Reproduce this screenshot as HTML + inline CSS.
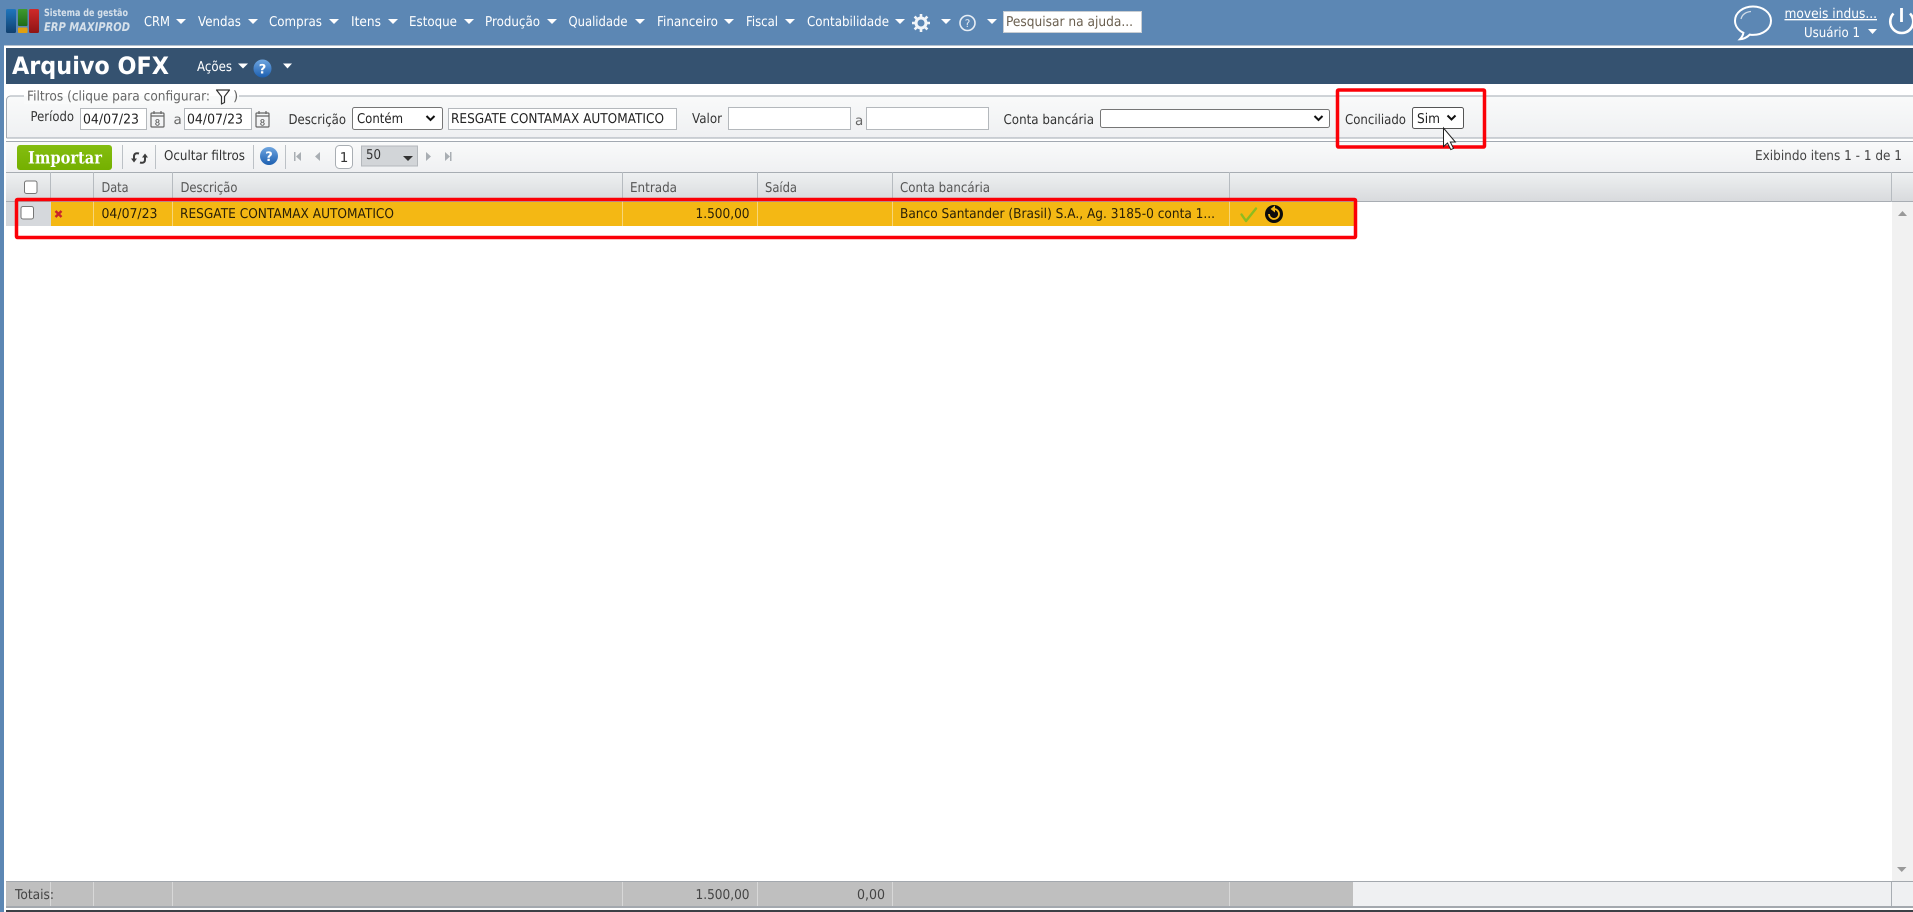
<!DOCTYPE html>
<html lang="pt-BR">
<head>
<meta charset="utf-8">
<title>Arquivo OFX</title>
<style>
html,body{margin:0;padding:0;width:1913px;height:912px;overflow:hidden;background:#fff}
svg{display:block;position:absolute;left:0;top:0}
text{font-family:"DejaVu Sans","Liberation Sans",sans-serif;font-size:13.5px;fill:#333;text-rendering:geometricPrecision;white-space:pre}
.n{fill:#fff}
.h{fill:#555}
.r{fill:#2a2008}
.v{fill:#222}
</style>
</head>
<body>
<svg width="1913" height="912" viewBox="0 0 1913 912" xmlns="http://www.w3.org/2000/svg">
<defs>
<linearGradient id="gf" x1="0" y1="0" x2="0" y2="1"><stop offset="0" stop-color="#f9fafa"/><stop offset="1" stop-color="#eff0f2"/></linearGradient>
<linearGradient id="gh" x1="0" y1="0" x2="0" y2="1"><stop offset="0" stop-color="#eff1f2"/><stop offset="1" stop-color="#d8dadd"/></linearGradient>
<linearGradient id="gb" x1="0" y1="0" x2="0" y2="1"><stop offset="0" stop-color="#1f76bd"/><stop offset="1" stop-color="#11406f"/></linearGradient>
<linearGradient id="gg" x1="0" y1="0" x2="0" y2="1"><stop offset="0" stop-color="#3f9a2e"/><stop offset="1" stop-color="#1f6b18"/></linearGradient>
<linearGradient id="gr" x1="0" y1="0" x2="0" y2="1"><stop offset="0" stop-color="#cf2a2a"/><stop offset="1" stop-color="#8e1414"/></linearGradient>
<linearGradient id="gq" x1="0" y1="0" x2="0" y2="1"><stop offset="0" stop-color="#6fa6e0"/><stop offset="1" stop-color="#1c5fb0"/></linearGradient>
<linearGradient id="gi" x1="0" y1="0" x2="0" y2="1"><stop offset="0" stop-color="#84bd10"/><stop offset="1" stop-color="#74b000"/></linearGradient>
</defs>

<!-- page frame -->
<rect width="1913" height="912" fill="#fff"/>
<rect x="0" y="0" width="1913" height="45" fill="#5c87b4"/>
<rect x="0" y="45" width="1913" height="1" fill="#b4c2d0"/>
<rect x="0" y="0" width="4" height="912" fill="#5c87b4"/>
<rect x="6" y="48" width="1907" height="36" fill="#355270"/>

<!-- logo -->
<rect x="6" y="9" width="10" height="24" rx="1.5" fill="url(#gb)"/>
<rect x="18" y="9" width="9.5" height="17" rx="1" fill="url(#gg)"/>
<rect x="18" y="27.5" width="9.5" height="5.5" rx="1" fill="#e0a010"/>
<rect x="29" y="9" width="10" height="24" rx="1.5" fill="url(#gr)"/>
<text x="44" y="16" style="font-size:10px;font-weight:bold;fill:#d5e0ea" textLength="84" lengthAdjust="spacingAndGlyphs">Sistema de gestão</text>
<text x="44" y="31" style="font-size:12px;font-weight:bold;font-style:italic;fill:#d5e0ea" textLength="86" lengthAdjust="spacingAndGlyphs">ERP MAXIPROD</text>

<!-- nav -->
<g class="nav">
<text class="n" x="144" y="26" textLength="26" lengthAdjust="spacingAndGlyphs">CRM</text><path d="M176 19h10l-5 5z" fill="#fff"/>
<text class="n" x="198" y="26" textLength="43" lengthAdjust="spacingAndGlyphs">Vendas</text><path d="M248 19h10l-5 5z" fill="#fff"/>
<text class="n" x="269" y="26" textLength="53" lengthAdjust="spacingAndGlyphs">Compras</text><path d="M329 19h10l-5 5z" fill="#fff"/>
<text class="n" x="351" y="26" textLength="30" lengthAdjust="spacingAndGlyphs">Itens</text><path d="M388 19h10l-5 5z" fill="#fff"/>
<text class="n" x="409" y="26" textLength="48" lengthAdjust="spacingAndGlyphs">Estoque</text><path d="M464 19h10l-5 5z" fill="#fff"/>
<text class="n" x="485" y="26" textLength="55" lengthAdjust="spacingAndGlyphs">Produção</text><path d="M547 19h10l-5 5z" fill="#fff"/>
<text class="n" x="568.5" y="26" textLength="59" lengthAdjust="spacingAndGlyphs">Qualidade</text><path d="M635 19h10l-5 5z" fill="#fff"/>
<text class="n" x="657" y="26" textLength="61" lengthAdjust="spacingAndGlyphs">Financeiro</text><path d="M724 19h10l-5 5z" fill="#fff"/>
<text class="n" x="746" y="26" textLength="32" lengthAdjust="spacingAndGlyphs">Fiscal</text><path d="M785 19h10l-5 5z" fill="#fff"/>
<text class="n" x="807" y="26" textLength="82" lengthAdjust="spacingAndGlyphs">Contabilidade</text><path d="M895 19h10l-5 5z" fill="#fff"/>
</g>
<!-- gear -->
<g transform="translate(921,23)" fill="none" stroke="#f2f5f8">
<circle r="5" stroke-width="3"/>
<path d="M0-9v3M0 6v3M-9 0h3M6 0h3M-6.400-6.400l2.100 2.100M4.300 4.300l2.100 2.100M-6.400 6.400l2.100-2.100M4.300-4.300l2.100-2.100" stroke-width="2.600"/>
</g>
<path d="M941 19h10l-5 5z" fill="#fff"/>
<circle cx="967.500" cy="23" r="7.500" fill="none" stroke="#e8eef5" stroke-width="1.600"/>
<text x="967.500" y="27" text-anchor="middle" style="font-size:10.500px;fill:#e8eef5">?</text>
<path d="M987 19h10l-5 5z" fill="#fff"/>
<rect x="1003.500" y="11.500" width="138" height="21" fill="#fff" stroke="#c8cdd2"/>
<text x="1006" y="26" style="fill:#6b6050" textLength="127" lengthAdjust="spacingAndGlyphs">Pesquisar na ajuda...</text>

<!-- user area -->
<path d="M1753 6.500c-10 0-18 6.200-18 14.200 0 5.200 3.400 9.600 8.400 12.100-.4 2.400-1.600 4.600-3.400 6.400 3.600-.2 7-1.900 9.800-4.600 1.100.2 2.200.3 3.200.3 10 0 18-6.200 18-14.200s-8-14.200-18-14.200z" fill="none" stroke="#fff" stroke-width="2"/>
<path d="M1741 19c1-4.500 5-7.200 10-7.500" fill="none" stroke="#cfdbe8" stroke-width="1.300"/>
<text class="n" x="1784.500" y="18" textLength="92.500" lengthAdjust="spacingAndGlyphs" text-decoration="underline">moveis indus...</text>
<text class="n" x="1804" y="37" textLength="56" lengthAdjust="spacingAndGlyphs">Usuário 1</text>
<path d="M1868 29h9l-4.500 5z" fill="#fff"/>
<path d="M1893.500 13.500a11.500 11.500 0 1 0 16.500 0" fill="none" stroke="#fff" stroke-width="2.600"/>
<path d="M1901.500 8v14" fill="none" stroke="#fff" stroke-width="2.800"/>

<!-- title bar -->
<text x="12" y="74" style="font-size:24px;font-weight:bold;fill:#fff" textLength="157" lengthAdjust="spacingAndGlyphs">Arquivo OFX</text>
<text class="n" x="197" y="71" textLength="35" lengthAdjust="spacingAndGlyphs">Ações</text>
<path d="M238 63.500h10l-5 5z" fill="#fff"/>
<circle cx="262.500" cy="68.500" r="9" fill="url(#gq)"/>
<text x="262.500" y="73.500" text-anchor="middle" style="font-size:13px;font-weight:bold;fill:#fff">?</text>
<path d="M283 63.500h9l-4.500 5z" fill="#fff"/>

<!-- filter panel -->
<path d="M6.500 138V100a4 4 0 0 1 4-4H1913V138z" fill="url(#gf)"/>
<path d="M6.500 138V100a4 4 0 0 1 4-4H1913M6.500 138H1913" fill="none" stroke="#a2a9b1"/>
<rect x="24" y="90" width="215" height="6" fill="#fff"/>
<rect x="24" y="96" width="215" height="8" fill="#f9fafa"/>
<text x="27" y="100.500" style="fill:#666" textLength="183" lengthAdjust="spacingAndGlyphs">Filtros (clique para configurar:</text>
<path d="M216.500 90h13l-5 6.500v6l-3 1.500v-7.500z" fill="#fff" stroke="#333" stroke-width="1.200" stroke-linejoin="round"/>
<text x="233" y="100.500" style="fill:#666">)</text>

<text x="30.500" y="121" textLength="43.500" lengthAdjust="spacingAndGlyphs">Período</text>
<rect x="80.500" y="108.500" width="66" height="21" fill="#fff" stroke="#b4b8bc"/>
<text class="v" x="83" y="123.500" textLength="56" lengthAdjust="spacingAndGlyphs">04/07/23</text>
<g fill="none" stroke="#666" stroke-width="1.200">
<rect x="151" y="113" width="13" height="14" rx="1"/><path d="M151 116h13M154 111v3M161 111v3"/>
<rect x="256" y="113" width="13" height="14" rx="1"/><path d="M256 116h13M259 111v3M266 111v3"/>
</g>
<text x="157.500" y="125.500" text-anchor="middle" style="font-size:8.500px;fill:#444">8</text>
<text x="262.500" y="125.500" text-anchor="middle" style="font-size:8.500px;fill:#444">8</text>
<text x="173.500" y="124" style="fill:#666">a</text>
<rect x="184.500" y="108.500" width="67" height="21" fill="#fff" stroke="#b4b8bc"/>
<text class="v" x="187" y="123.500" textLength="56" lengthAdjust="spacingAndGlyphs">04/07/23</text>

<text x="288.500" y="124" textLength="57.500" lengthAdjust="spacingAndGlyphs">Descrição</text>
<rect x="352.500" y="107.500" width="90" height="22" rx="2" fill="#fff" stroke="#767676"/>
<text class="v" x="357" y="123" textLength="46" lengthAdjust="spacingAndGlyphs">Contém</text>
<path d="M426.500 116l4 4 4-4" fill="none" stroke="#111" stroke-width="2"/>
<rect x="448.500" y="108.500" width="228" height="21" fill="#fff" stroke="#b4b8bc"/>
<text class="v" x="451" y="123" textLength="213" lengthAdjust="spacingAndGlyphs">RESGATE CONTAMAX AUTOMATICO</text>

<text x="692" y="123" textLength="30" lengthAdjust="spacingAndGlyphs">Valor</text>
<rect x="728.500" y="107.500" width="122" height="22" fill="#fff" stroke="#b4b8bc"/>
<text x="855" y="125" style="fill:#666">a</text>
<rect x="866.500" y="107.500" width="122" height="22" fill="#fff" stroke="#b4b8bc"/>

<text x="1003.500" y="124" textLength="90.500" lengthAdjust="spacingAndGlyphs">Conta bancária</text>
<rect x="1100.500" y="109.500" width="229" height="18" rx="2" fill="#fff" stroke="#767676"/>
<path d="M1314.500 116l4 4 4-4" fill="none" stroke="#111" stroke-width="2"/>

<text x="1345" y="124" textLength="61" lengthAdjust="spacingAndGlyphs">Conciliado</text>
<rect x="1412.500" y="107.500" width="51" height="21" rx="2" fill="#fff" stroke="#555"/>
<text class="v" x="1417" y="123" textLength="23" lengthAdjust="spacingAndGlyphs">Sim</text>
<path d="M1447.500 115.500l4 4 4-4" fill="none" stroke="#111" stroke-width="2"/>

<!-- toolbar -->
<rect x="6" y="142" width="1907" height="30" fill="url(#gf)"/>
<path d="M6 141.500H1913" stroke="#a2a9b1"/>
<rect x="17" y="145" width="95" height="25" rx="3" fill="url(#gi)"/>
<text x="28" y="163.500" style="font-family:'DejaVu Serif','Liberation Serif',serif;font-size:17px;font-weight:bold;fill:#fff" textLength="74" lengthAdjust="spacingAndGlyphs">Importar</text>
<path d="M122.500 145v24M155.500 145v24M253.500 145v24M285.500 145v24" stroke="#bcc1c6"/>
<path d="M139 153.500c-3-.8-5 0-5 3v3" fill="none" stroke="#3c3c3c" stroke-width="2"/>
<path d="M131 158.500h6l-3 4z" fill="#3c3c3c"/>
<path d="M140 162.500c3 .8 5 0 5-3v-3" fill="none" stroke="#3c3c3c" stroke-width="2"/>
<path d="M142 157.500h6l-3-4z" fill="#3c3c3c"/>
<text x="164" y="160" style="fill:#333" textLength="81" lengthAdjust="spacingAndGlyphs">Ocultar filtros</text>
<circle cx="269" cy="156" r="9" fill="url(#gq)"/>
<text x="269" y="161" text-anchor="middle" style="font-size:13px;font-weight:bold;fill:#fff">?</text>
<g fill="#a9aeb3">
<path d="M294 152h1.500v9H294zM301 152v9l-5-4.500z"/>
<path d="M320 152v9l-5-4.500z"/>
<path d="M426 152v9l5-4.500z"/>
<path d="M445 152v9l5-4.500zM450 152h1.500v9H450z"/>
</g>
<rect x="335.500" y="145.500" width="17" height="23" rx="4" fill="#fff" stroke="#a9aeb3"/>
<text x="344" y="162" text-anchor="middle" style="fill:#333">1</text>
<rect x="361.500" y="146" width="56" height="20" fill="#d2d5d8" stroke="#b4b8bc"/>
<text x="366" y="159" style="fill:#333" textLength="15" lengthAdjust="spacingAndGlyphs">50</text>
<path d="M403 156h10l-5 5z" fill="#333"/>
<text x="1755" y="160" style="fill:#444" textLength="147" lengthAdjust="spacingAndGlyphs">Exibindo itens 1 - 1 de 1</text>

<!-- grid header -->
<rect x="6" y="172" width="1907" height="29.500" fill="url(#gh)"/>
<path d="M6 172.500H1913M6 201.500H1913" stroke="#a8adb3"/>
<path d="M50.500 172v30M93.500 172v30M172.500 172v30M622.500 172v30M757.500 172v30M892.500 172v30M1229.500 172v30M1891.500 172v30" stroke="#b6bbc0"/>
<rect x="24.500" y="181" width="12.500" height="12.500" rx="2" fill="#fff" stroke="#767676"/>
<text class="h" x="101.500" y="192" textLength="27" lengthAdjust="spacingAndGlyphs">Data</text>
<text class="h" x="180.500" y="192" textLength="57" lengthAdjust="spacingAndGlyphs">Descrição</text>
<text class="h" x="630" y="192" textLength="47" lengthAdjust="spacingAndGlyphs">Entrada</text>
<text class="h" x="765" y="192" textLength="32" lengthAdjust="spacingAndGlyphs">Saída</text>
<text class="h" x="900" y="192" textLength="90" lengthAdjust="spacingAndGlyphs">Conta bancária</text>

<!-- scrollbar -->
<rect x="1892" y="202" width="21" height="680" fill="#f1f1f1"/>
<path d="M1898 216h9l-4.500-5z" fill="#999"/>
<path d="M1897 867h9.500l-4.750 5z" fill="#999"/>

<!-- row -->
<rect x="6" y="202" width="45" height="24" fill="#d5d8dc"/>
<rect x="51" y="202" width="1303" height="24" fill="#f4b814"/>
<path d="M93.500 202v24M172.500 202v24M622.500 202v24M757.500 202v24M892.500 202v24M1229.500 202v24" stroke="#f7d67a"/>
<rect x="21" y="206.500" width="12.500" height="12.500" rx="2" fill="#fff" stroke="#767676"/>
<path d="M55.500 211l6 6M61.500 211l-6 6" stroke="#c8242a" stroke-width="2.400"/>
<text class="r" x="101.500" y="218" textLength="56" lengthAdjust="spacingAndGlyphs">04/07/23</text>
<text class="r" x="180" y="218" textLength="214" lengthAdjust="spacingAndGlyphs">RESGATE CONTAMAX AUTOMATICO</text>
<text class="r" x="695.500" y="218" textLength="54" lengthAdjust="spacingAndGlyphs">1.500,00</text>
<text class="r" x="900" y="218" textLength="315" lengthAdjust="spacingAndGlyphs">Banco Santander (Brasil) S.A., Ag. 3185-0 conta 1...</text>
<path d="M1241.500 214.500l4.500 6.500 10-12.500" fill="none" stroke="#8cbc20" stroke-width="2.400" stroke-linecap="round" stroke-linejoin="round"/>
<circle cx="1274" cy="214" r="9" fill="#0c0c0c"/>
<path d="M1274 209a5 5 0 1 1-5 5" fill="none" stroke="#f4b814" stroke-width="1.800"/>
<path d="M1275 205.500v7l-4.500-3.500z" fill="#f4b814"/>

<!-- totals -->
<rect x="6" y="882" width="1347" height="24" fill="#bfbfbf"/>
<rect x="1353" y="882" width="538" height="24" fill="#eff0f2"/>
<rect x="1892" y="882" width="21" height="24" fill="#eff0f2"/>
<path d="M50.500 882v24M93.500 882v24M172.500 882v24M622.500 882v24M757.500 882v24M892.500 882v24M1229.500 882v24" stroke="#d8d8d8"/>
<path d="M1891.500 882v24" stroke="#a8adb3"/>
<path d="M6 881.500H1913" stroke="#a3a8ae"/>
<rect x="6" y="906" width="1907" height="2" fill="#a3a8ae"/>
<rect x="6" y="910" width="1907" height="2" fill="#3c4046"/>
<text x="15" y="899" style="fill:#444" textLength="39" lengthAdjust="spacingAndGlyphs">Totais:</text>
<text x="695.500" y="899" style="fill:#444" textLength="54" lengthAdjust="spacingAndGlyphs">1.500,00</text>
<text x="857" y="899" style="fill:#444" textLength="28" lengthAdjust="spacingAndGlyphs">0,00</text>

<!-- red annotations -->
<rect x="1337.500" y="90" width="147" height="57" rx="1" fill="none" stroke="#fb0007" stroke-width="3.500"/>
<rect x="16.500" y="199.500" width="1339" height="38" rx="1" fill="none" stroke="#fb0007" stroke-width="3.500"/>

<!-- mouse cursor -->
<path d="M1443.500 128v18.500l4-3.400 3.300 6.500 2.700-1.200-3.200-6.400h5z" fill="#fff" stroke="#222" stroke-width="1"/>
</svg>
</body>
</html>
